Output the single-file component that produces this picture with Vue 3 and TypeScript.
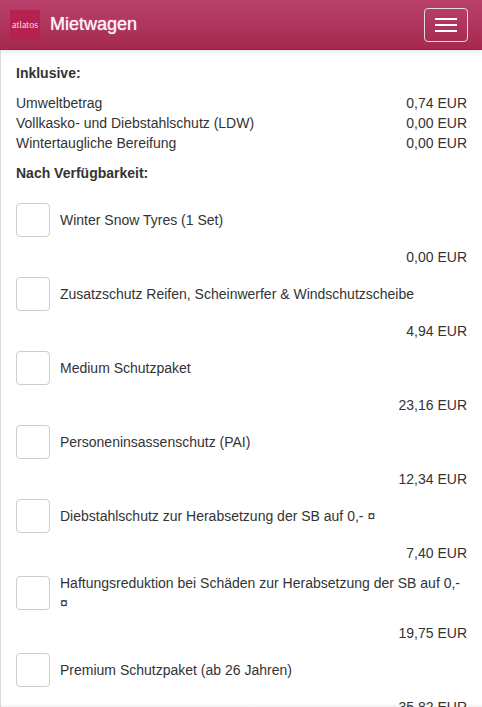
<script setup lang="ts">
import { ref } from 'vue'

interface Fee {
  name: string
  price: string
}

interface Extra extends Fee {
  id: string
}

const included: Fee[] = [
  { name: 'Umweltbetrag', price: '0,74 EUR' },
  { name: 'Vollkasko- und Diebstahlschutz (LDW)', price: '0,00 EUR' },
  { name: 'Wintertaugliche Bereifung', price: '0,00 EUR' },
]

const extras: Extra[] = [
  { id: 'tyres', name: 'Winter Snow Tyres (1 Set)', price: '0,00 EUR' },
  { id: 'glass', name: 'Zusatzschutz Reifen, Scheinwerfer & Windschutzscheibe', price: '4,94 EUR' },
  { id: 'medium', name: 'Medium Schutzpaket', price: '23,16 EUR' },
  { id: 'pai', name: 'Personeninsassenschutz (PAI)', price: '12,34 EUR' },
  { id: 'theft', name: 'Diebstahlschutz zur Herabsetzung der SB auf 0,- ¤', price: '7,40 EUR' },
  { id: 'liability', name: 'Haftungsreduktion bei Schäden zur Herabsetzung der SB auf 0,- ¤', price: '19,75 EUR' },
  { id: 'premium', name: 'Premium Schutzpaket (ab 26 Jahren)', price: '35,82 EUR' },
]

const selected = ref<string[]>([])
</script>

<template>
  <div class="page">
    <header class="navbar">
      <a class="brand" href="#">
        <svg class="logo" viewBox="0 0 30 30" role="img" aria-label="atlatos">
          <rect width="30" height="30" fill="#b5224f" />
          <text x="15" y="18" text-anchor="middle" class="logo-text">atlatos</text>
        </svg>
        <span class="title">Mietwagen</span>
      </a>
      <button class="toggle" type="button" aria-label="Menü">
        <span class="bar"></span>
        <span class="bar"></span>
        <span class="bar"></span>
      </button>
    </header>

    <main class="content">
      <h2 class="heading">Inklusive:</h2>
      <ul class="list">
        <li v-for="fee in included" :key="fee.name" class="fee">
          <span>{{ fee.name }}</span>
          <span>{{ fee.price }}</span>
        </li>
      </ul>

      <h2 class="heading">Nach Verfügbarkeit:</h2>
      <ul class="list extras">
        <li v-for="extra in extras" :key="extra.id" class="extra">
          <div class="choice">
            <input :id="extra.id" v-model="selected" class="box" type="checkbox" :value="extra.id" />
            <label :for="extra.id">{{ extra.name }}</label>
          </div>
          <div class="price">{{ extra.price }}</div>
        </li>
      </ul>
    </main>
  </div>
</template>

<style>
body {
  background: #fff;
}
</style>

<style scoped>
.page {
  box-sizing: border-box;
  height: 100vh;
  display: flex;
  flex-direction: column;
  font-family: "Liberation Sans", Arial, sans-serif;
  font-size: 14px;
  line-height: 20px;
  color: #333;
}

/* Soft shade where the list scrolls out of view */
.page::after {
  content: "";
  z-index: 1;
  flex: none;
  height: 4px;
  margin-top: -4px;
  background: linear-gradient(rgba(0, 0, 0, 0), rgba(0, 0, 0, 0.05));
  pointer-events: none;
}

.navbar {
  box-sizing: border-box;
  flex: none;
  z-index: 1;
  display: flex;
  align-items: center;
  justify-content: space-between;
  height: 50px;
  padding: 0 14px 0 10px;
  border-bottom: 1px solid #952347;
  background: linear-gradient(#b9416b, #a5294f);
  box-shadow: 0 1px 6px rgba(0, 0, 0, 0.14);
}

.brand {
  display: flex;
  align-items: flex-start;
  gap: 10px;
  color: #fff;
  text-decoration: none;
}

.logo {
  display: block;
  width: 30px;
  height: 30px;
}

.logo-text {
  font-family: "Liberation Serif", serif;
  font-size: 10px;
  fill: #f3d9e1;
}

.title {
  font-size: 18px;
  line-height: 28px;
  color: #fbeff3;
  text-shadow: 0 0 1px #fbeff3;
}

.toggle {
  box-sizing: border-box;
  display: flex;
  flex-direction: column;
  align-items: center;
  justify-content: center;
  gap: 4px;
  width: 44px;
  height: 34px;
  padding: 0;
  border: 1px solid #ddd;
  border-radius: 4px;
  background: transparent;
}

.bar {
  width: 22px;
  height: 2px;
  background: #fff;
}

.content {
  flex: 1;
  min-height: 0;
  overflow-y: auto;
  scrollbar-width: none;
  padding: 13px 15px 0;
  border-left: 1px solid #ddd;
}

.heading {
  margin: 0 0 10px;
  font-size: 14px;
  font-weight: bold;
  line-height: 20px;
}

.list {
  margin: 0 0 10px;
  padding: 0;
  list-style: none;
}

.fee {
  display: flex;
  justify-content: space-between;
}

.extras {
  display: flex;
  flex-direction: column;
  gap: 10px;
  padding-top: 10px;
}

.choice {
  display: flex;
  align-items: center;
  gap: 10px;
  margin-bottom: 10px;
}

.box {
  appearance: none;
  box-sizing: border-box;
  flex: none;
  width: 34px;
  height: 34px;
  margin: 0;
  border: 1px solid #ccc;
  border-radius: 4px;
  background: #fff;
}

.box:checked {
  background: #a5294f;
  box-shadow: inset 0 0 0 8px #fff;
}

.price {
  text-align: right;
}
</style>
